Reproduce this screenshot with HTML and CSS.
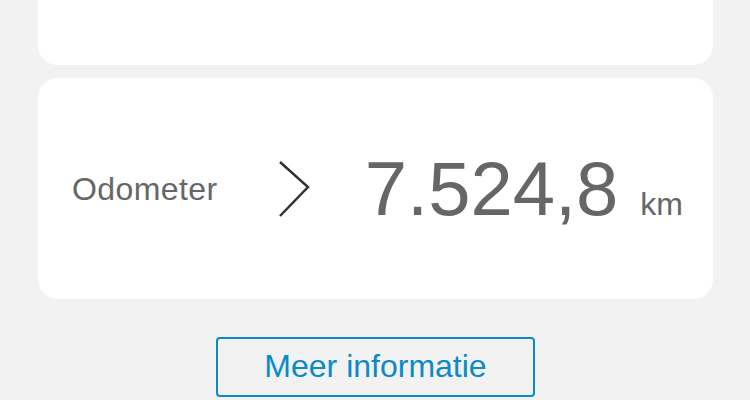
FILE: index.html
```html
<!DOCTYPE html>
<html lang="nl">
<head>
<meta charset="utf-8">
<title>Odometer</title>
<link rel="stylesheet" href="styles.css">
</head>
<body>
<main class="page">
  <section class="card card-top"></section>
  <section class="card card-odo">
    <span class="odo-label">Odometer</span>
    <svg class="chevron" width="32" height="60" viewBox="0 0 32 60" aria-hidden="true">
      <path d="M2 3 L30 28 L2 57" fill="none" stroke="#2e2e2e" stroke-width="2.4"/>
    </svg>
    <div class="odo-value">
      <span class="odo-number">7.524,8</span>
      <span class="odo-unit">km</span>
    </div>
  </section>
  <div class="actions">
    <button class="more-btn" type="button">Meer informatie</button>
  </div>
</main>
</body>
</html>
```
FILE: styles.css
```css
html, body {
  margin: 0;
  padding: 0;
  background: #f2f2f2;
}
body {
  width: 750px;
  height: 400px;
  overflow: hidden;
  font-family: "Liberation Sans", Arial, sans-serif;
  color: #666666;
}
.page {
  display: flex;
  flex-direction: column;
  padding: 0 37px 0 38px;
}
.card {
  background: #ffffff;
}
.card-top {
  height: 65px;
  border-radius: 0 0 20px 20px;
}
.card-odo {
  margin-top: 13px;
  height: 221px;
  border-radius: 20px;
  display: flex;
  align-items: center;
  padding: 0 30px 0 34px;
  box-sizing: border-box;
}
.odo-label {
  font-size: 32px;
  width: 206px;
  line-height: 1;
  letter-spacing: 0.4px;
  margin-top: 0;
}
.chevron {
  display: block;
}
.odo-value {
  margin-left: auto;
  display: flex;
  align-items: baseline;
  gap: 22px;
  margin-top: 0;
}
.odo-number {
  font-size: 76px;
  line-height: 1;
}
.odo-unit {
  font-size: 32px;
  line-height: 1;
}
.actions {
  display: flex;
  justify-content: center;
  margin-top: 38px;
}
.more-btn {
  width: 319px;
  height: 60px;
  box-sizing: border-box;
  border: 2px solid #0a8ac8;
  border-radius: 4px;
  background: transparent;
  color: #0a8ac8;
  font-family: "Liberation Sans", Arial, sans-serif;
  font-size: 32px;
  padding: 0 0 2px 0;
}
```
